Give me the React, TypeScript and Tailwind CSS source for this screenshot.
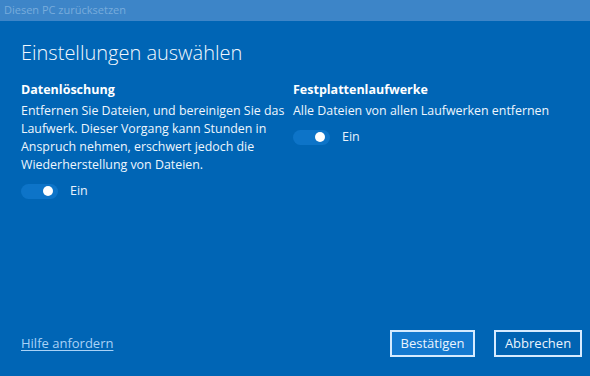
// Dialog "Diesen PC zurücksetzen" – Einstellungen auswählen

function Toggle() {
  return (
    <div className="flex items-center gap-[12px]">
      <div className="flex h-[15px] w-[37px] items-center justify-end rounded-full bg-[#0d74c8] pr-[5px]">
        <span className="h-[10px] w-[10px] rounded-full bg-white" />
      </div>
      <span className="text-[12.5px] text-[#e8f2fc]">Ein</span>
    </div>
  )
}

export default function App() {
  return (
    <div
      className="flex h-[376px] w-[590px] flex-col bg-[#0065b5] text-white"
      style={{ fontFamily: '"Open Sans", "Noto Sans", sans-serif' }}
    >
      {/* Titelleiste */}
      <div className="flex h-[21px] items-center bg-[#3d85c8] px-[4px] text-[11px] text-[#78acdc]">
        Diesen PC zurücksetzen
      </div>

      <div className="flex flex-1 flex-col pl-[21px] pr-[8px] pb-[19px]">
        <h1 className="mt-[18px] text-[20px] font-light leading-[28px] text-[#f2f8fe]">
          Einstellungen auswählen
        </h1>

        <div className="mt-[13px] grid grid-cols-[272px_1fr]">
          <div>
            <h2 className="text-[12.5px] font-bold leading-[19px]">Datenlöschung</h2>
            <p className="mt-[3px] w-[272px] text-[12.4px] leading-[18px] text-[#eef6fd]">
              Entfernen Sie Dateien, und bereinigen Sie das Laufwerk. Dieser Vorgang kann
              Stunden in Anspruch nehmen, erschwert jedoch die Wiederherstellung von Dateien.
            </p>
            <div className="mt-[8px]">
              <Toggle />
            </div>
          </div>
          <div>
            <h2 className="text-[12.5px] font-bold leading-[19px]">Festplattenlaufwerke</h2>
            <p className="mt-[3px] text-[12.4px] leading-[18px] text-[#eef6fd]">
              Alle Dateien von allen Laufwerken entfernen
            </p>
            <div className="mt-[8px]">
              <Toggle />
            </div>
          </div>
        </div>

        <div className="mt-auto flex items-center">
          <a className="text-[13px] text-[#a9d2f7] underline underline-offset-2">Hilfe anfordern</a>
          <div className="ml-auto flex gap-[19px]">
            <button className="h-[27px] w-[85px] border-2 border-[#d6ebff] bg-[#1479cf] text-[13px] text-[#eaf4fe]">
              Bestätigen
            </button>
            <button className="h-[27px] w-[88px] border-2 border-[#d6ebff] bg-[#0063b2] text-[13px] text-[#eaf4fe]">
              Abbrechen
            </button>
          </div>
        </div>
      </div>
    </div>
  )
}
